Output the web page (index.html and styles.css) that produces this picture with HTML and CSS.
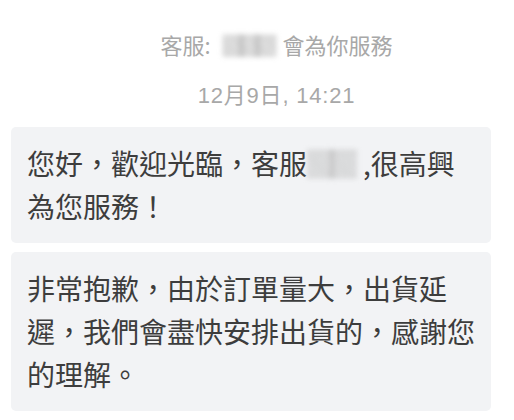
FILE: index.html
```html
<!DOCTYPE html>
<html lang="zh-TW">
<head>
  <title>客服對話</title>
  <link rel="stylesheet" href="styles.css">
</head>
<body>
  <div id="chat">
    <div class="notice">客服:<span class="masked wide">▓▓▓</span>會為你服務</div>
    <div class="time">12月9日, 14:21</div>

    <div class="bubble">您好，歡迎光臨，客服<span class="masked">▓▓</span>,很高興為您服務！</div>
    <div class="bubble">非常抱歉，由於訂單量大，出貨延遲，我們會盡快安排出貨的，感謝您的理解。</div>
  </div>
</body>
</html>
```

FILE: styles.css
```css
* {
  margin: 0;
  padding: 0;
  box-sizing: border-box;
}

body {
  background-color: #ffffff;
  font-family: "Noto Sans CJK TC", sans-serif;
}

#chat {
  width: 514px;
  padding: 29px 0 0 11px;
}

.notice,
.time {
  color: #a8a8a8;
  font-size: 22px;
  line-height: 30px;
  text-align: center;
  padding-left: 28px;
}

.time {
  font-family: "Liberation Sans", "Noto Sans CJK TC", sans-serif;
  letter-spacing: 0.8px;
  margin-top: 22px;
  margin-bottom: 16px;
}

.bubble {
  width: 480px;
  background-color: #f2f3f5;
  border-radius: 5px;
  color: #3d3d3d;
  font-size: 28px;
  line-height: 43px;
  padding: 15px 16px;
  margin-bottom: 9px;
}

.masked {
  display: inline-block;
  color: #b8b8b8;
  filter: blur(2.5px);
  width: 56px;
  overflow: hidden;
  white-space: nowrap;
  vertical-align: bottom;
  letter-spacing: -6px;
}

.masked.wide {
  width: 72px;
  color: #a8a8a8;
}
```
